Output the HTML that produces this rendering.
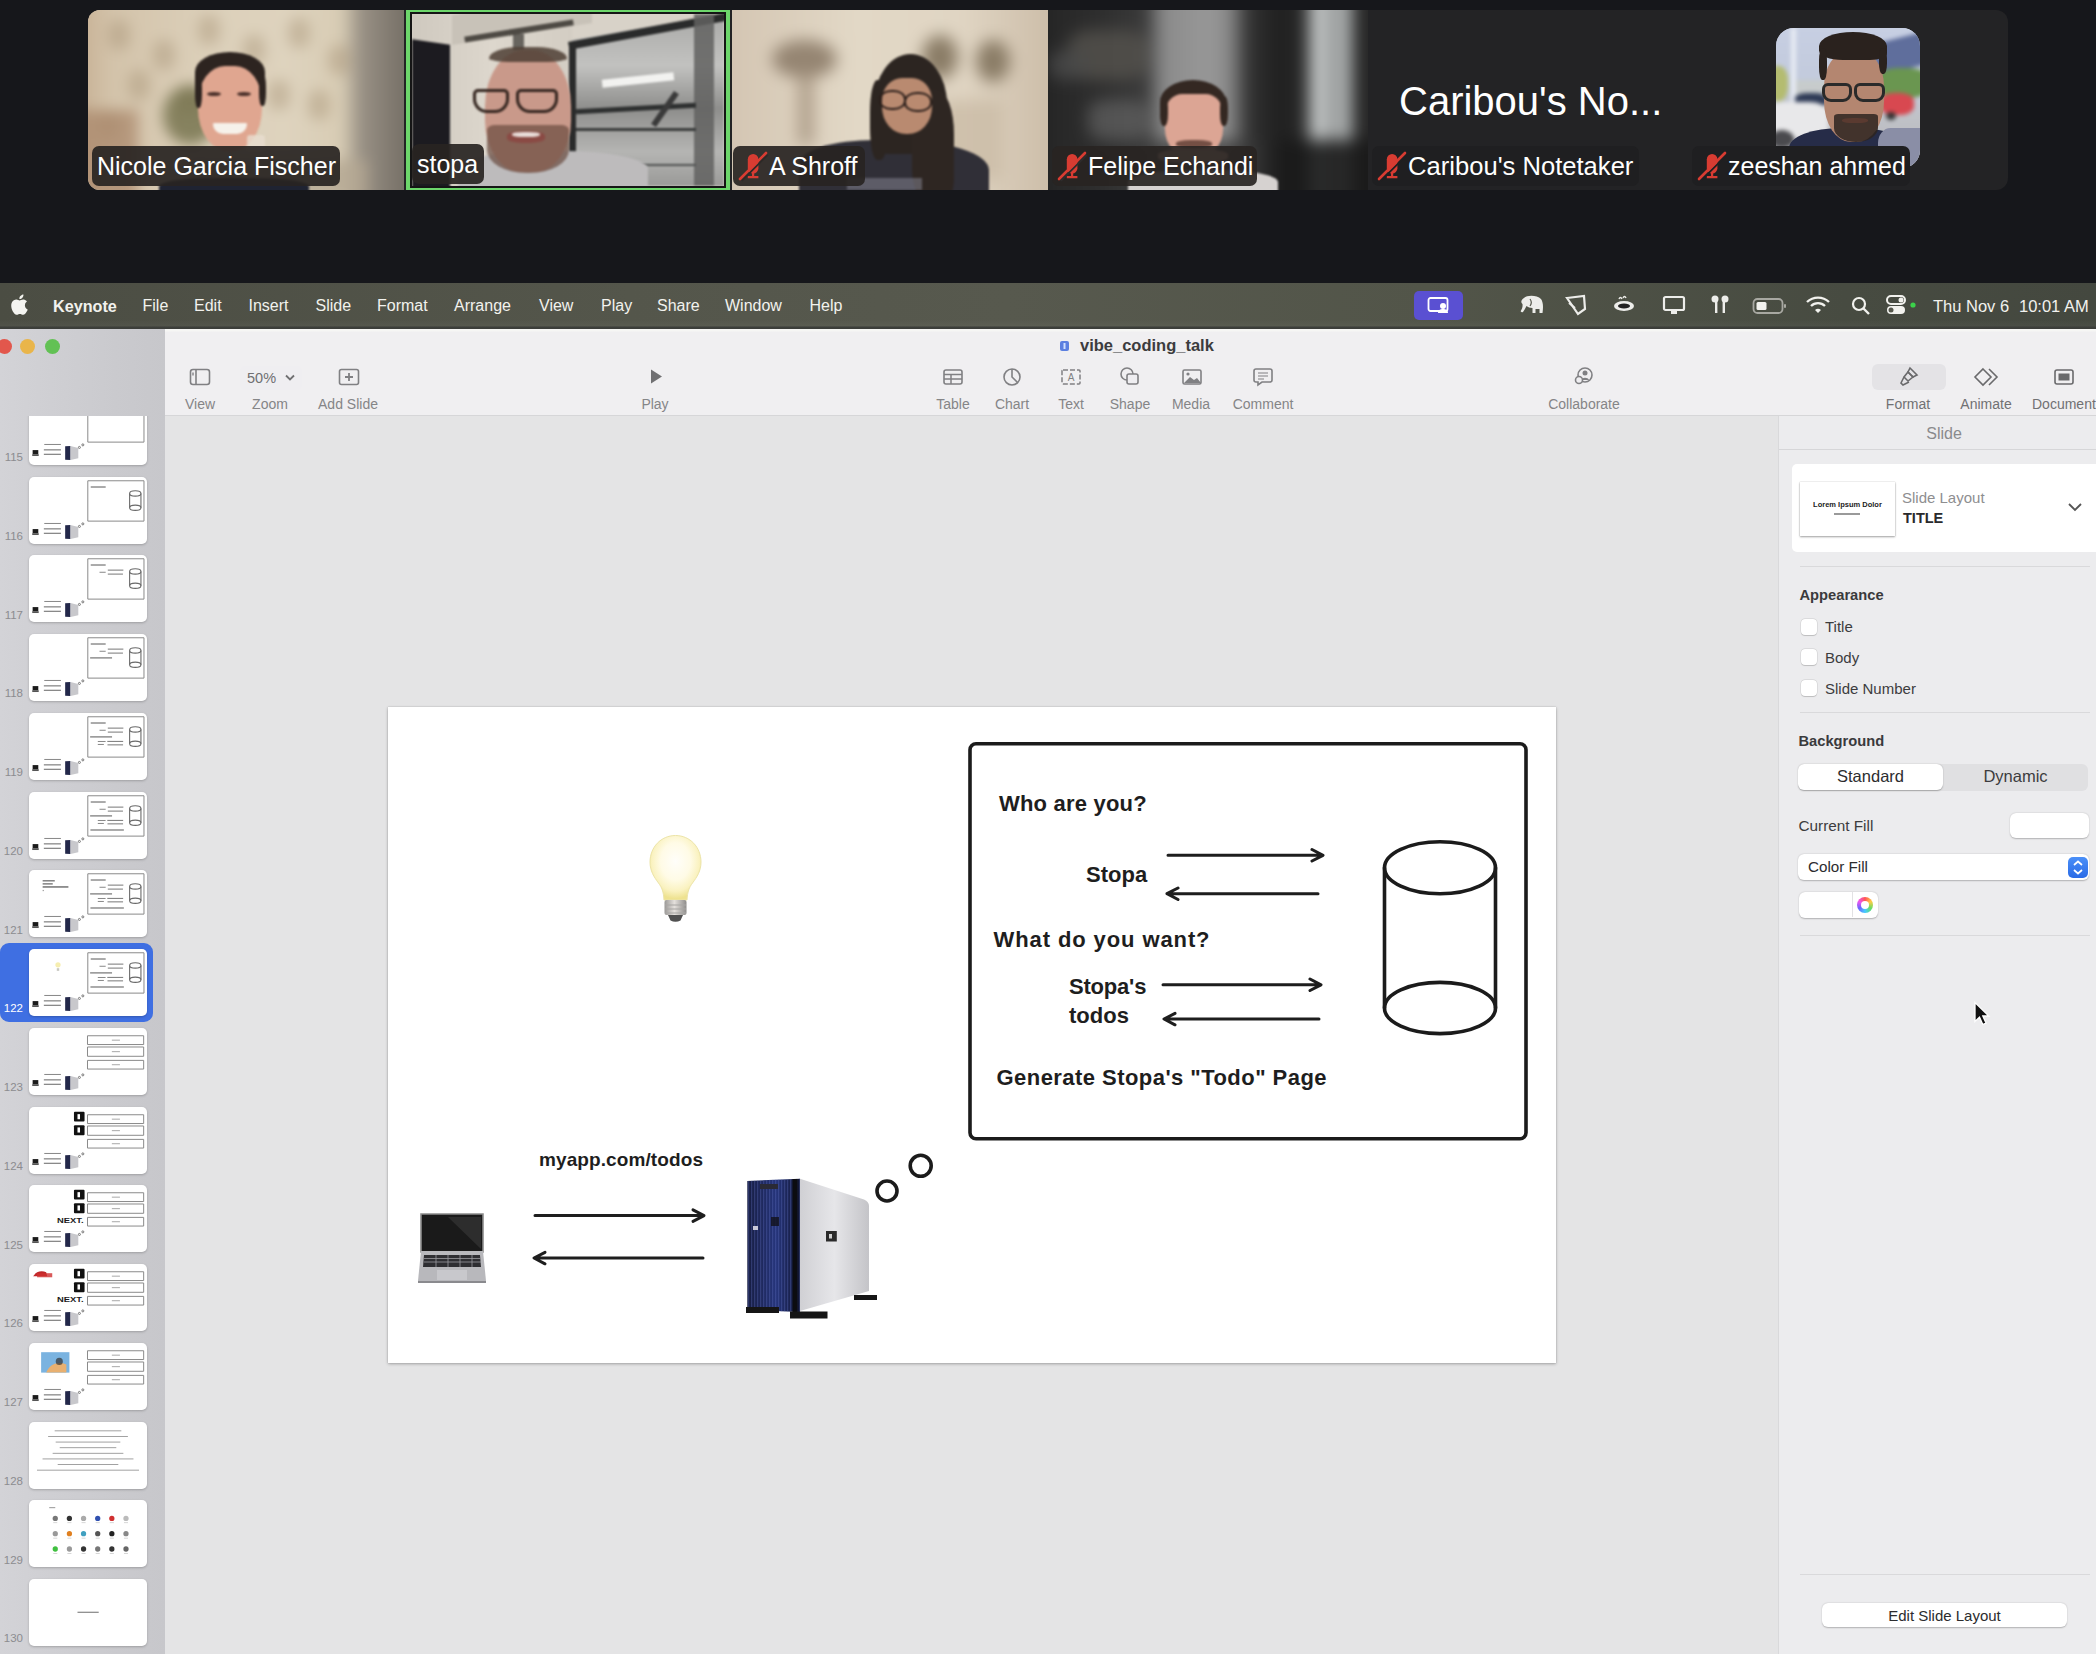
<!DOCTYPE html>
<html><head><meta charset="utf-8">
<style>
*{box-sizing:border-box;margin:0;padding:0}
html,body{width:2096px;height:1654px;overflow:hidden;background:#16171b;font-family:"Liberation Sans",sans-serif}
.a{position:absolute}
.lbl{position:absolute;top:146px;height:40px;border-radius:7px;background:rgba(40,36,34,.92);color:#fff;font-size:25px;line-height:40px;padding-left:5px;white-space:nowrap}
.mic{display:inline-block;vertical-align:top}
.menu{position:absolute;top:283px;left:0;width:2096px;height:46px;background:linear-gradient(180deg,rgba(255,255,255,0) 0%,rgba(255,255,255,0) 80%,rgba(255,255,255,.03) 93%,#3c3e3a 96%,#3c3e3a 100%),linear-gradient(90deg,#4b4d43 0%,#54564b 30%,#57594e 48%,#525549 68%,#474b41 88%,#44483f 100%)}
.mi{position:absolute;top:14.5px;line-height:1;font-size:16px;color:#f2f2ee;white-space:nowrap}
.tb{position:absolute;font-size:14px;color:#858587;white-space:nowrap;text-align:center}
.ic{position:absolute}
.ins{line-height:1;white-space:nowrap}
.cb{left:1801px;width:15.5px;height:15.5px;border-radius:4px;background:#fff;box-shadow:0 0 0 .5px rgba(0,0,0,.12),0 .5px 1px rgba(0,0,0,.15)}
.hand{font-size:22px;font-weight:700;line-height:1;color:#1e1e1e;white-space:nowrap}
</style></head><body>

<!-- ZOOM STRIP -->
<div class="a" id="strip" style="left:88px;top:10px;width:1920px;height:180px;border-radius:12px;overflow:hidden;background:#232325">
<div class="a" style="left:0;top:0;width:316px;height:180px;overflow:hidden;background:#d8ccb6">
<div class="a" style="left:-20px;top:-20px;width:356px;height:220px;filter:blur(7px)">
<div class="a" style="left:0px;top:0px;width:356px;height:220px;background:linear-gradient(90deg,#c2a98c 0%,#d3c3aa 12%,#dcd0ba 40%,#ded3be 62%,#d8ccb4 77%,#9a9286 82%,#837c72 90%,#6a645c 100%);"></div>
<div class="a" style="left:40px;top:30px;width:22px;height:30px;background:#a99478;border-radius:40%;opacity:.45"></div>
<div class="a" style="left:85px;top:50px;width:22px;height:30px;background:#a99478;border-radius:40%;opacity:.45"></div>
<div class="a" style="left:130px;top:25px;width:22px;height:30px;background:#a99478;border-radius:40%;opacity:.45"></div>
<div class="a" style="left:175px;top:45px;width:22px;height:30px;background:#a99478;border-radius:40%;opacity:.45"></div>
<div class="a" style="left:220px;top:28px;width:22px;height:30px;background:#a99478;border-radius:40%;opacity:.45"></div>
<div class="a" style="left:260px;top:55px;width:22px;height:30px;background:#a99478;border-radius:40%;opacity:.45"></div>
<div class="a" style="left:60px;top:80px;width:22px;height:30px;background:#a99478;border-radius:40%;opacity:.45"></div>
<div class="a" style="left:110px;top:95px;width:22px;height:30px;background:#a99478;border-radius:40%;opacity:.45"></div>
<div class="a" style="left:200px;top:90px;width:22px;height:30px;background:#a99478;border-radius:40%;opacity:.45"></div>
<div class="a" style="left:240px;top:100px;width:22px;height:30px;background:#a99478;border-radius:40%;opacity:.45"></div>
<div class="a" style="left:30px;top:120px;width:22px;height:30px;background:#a99478;border-radius:40%;opacity:.45"></div>
<div class="a" style="left:95px;top:95px;width:55px;height:60px;background:#6a6842;border-radius:50%;opacity:.75"></div>
<div class="a" style="left:0px;top:120px;width:70px;height:100px;background:#a88468;opacity:.7"></div>
<div class="a" style="left:120px;top:170px;width:180px;height:40px;background:#b4a892;opacity:.8"></div>
</div>
<div class="a" style="left:-9px;top:-8px;width:316px;height:188px;filter:blur(1px)">
<div class="a" style="left:80px;top:176px;width:150px;height:20px;background:#1f2332;border-radius:40% 40% 0 0"></div>
<div class="a" style="left:116px;top:50px;width:70px;height:40px;background:#2d2420;border-radius:50% 50% 20% 20%"></div>
<div class="a" style="left:119px;top:64px;width:64px;height:86px;background:#e0a690;border-radius:42% 42% 50% 50%"></div>
<div class="a" style="left:116px;top:72px;width:7px;height:34px;background:#2d2420;border-radius:40%"></div>
<div class="a" style="left:180px;top:72px;width:7px;height:32px;background:#2d2420;border-radius:40%"></div>
<div class="a" style="left:128px;top:90px;width:14px;height:4px;background:#4a302a;border-radius:50%"></div>
<div class="a" style="left:158px;top:90px;width:14px;height:4px;background:#4a302a;border-radius:50%"></div>
<div class="a" style="left:134px;top:121px;width:34px;height:11px;background:#f6f1ea;border-radius:2px 2px 17px 17px"></div>
<div class="a" style="left:168px;top:133px;width:18px;height:16px;background:#e8ddd0;border-radius:3px;opacity:.8"></div>
</div>
<div class="lbl" style="left:4px;top:136px;width:248px">Nicole Garcia Fischer</div>
</div>
<div class="a" style="left:318px;top:-2px;width:324px;height:184px;background:#6dd66b;padding:4px">
<div style="position:relative;width:316px;height:176px;background:#151515;padding:2px;overflow:hidden">
<div style="position:relative;width:312px;height:172px;overflow:hidden;background:#d8d2c8">
<div class="a" style="left:0;top:0;width:312px;height:172px;filter:blur(1.2px)">
<div class="a" style="left:0px;top:0px;width:160px;height:172px;background:linear-gradient(90deg,#cfc9bf,#ddd7cd 50%,#d3cdc3);"></div>
<div class="a" style="left:0px;top:28px;width:38px;height:160px;background:#1c1b20;transform:skewY(8deg)"></div>
<div class="a" style="left:40px;top:-10px;width:140px;height:30px;background:#c8c2b8;transform:skewY(-9deg)"></div>
<div class="a" style="left:52px;top:14px;width:110px;height:6px;background:#4e4a44;transform:rotate(-9deg)"></div>
<div class="a" style="left:101px;top:20px;width:11px;height:16px;background:#4a4742;opacity:.8"></div>
<div class="a" style="left:160px;top:0px;width:152px;height:172px;background:linear-gradient(180deg,#a9a9a7 0%,#c2c2c0 30%,#8e8e8c 55%,#b5b5b3 80%,#9a9a98 100%);clip-path:polygon(0 26px,100% 0,100% 100%,0 100%)"></div>
<div class="a" style="left:156px;top:0px;width:160px;height:8px;background:#2a2b2b;transform:rotate(-10.5deg);transform-origin:0 0;top:28px"></div>
<div class="a" style="left:157px;top:28px;width:7px;height:130px;background:#2a2b2b;"></div>
<div class="a" style="left:282px;top:0px;width:20px;height:172px;background:#626260;opacity:.85"></div>
<div class="a" style="left:190px;top:62px;width:72px;height:8px;background:#f2f2f0;transform:rotate(-6deg)"></div>
<div class="a" style="left:164px;top:92px;width:120px;height:5px;background:#2e3030;transform:rotate(-3deg)"></div>
<div class="a" style="left:164px;top:114px;width:120px;height:3px;background:#3a3c3c;"></div>
<div class="a" style="left:164px;top:150px;width:120px;height:2px;background:#505252;"></div>
<div class="a" style="left:250px;top:75px;width:6px;height:40px;background:#3a3a3a;transform:rotate(35deg)"></div>
</div>
<div class="a" style="left:-9px;top:-11px;width:321px;height:183px;filter:blur(.8px)">
<div class="a" style="left:55px;top:148px;width:190px;height:40px;background:#bdbbbc;border-radius:45% 45% 0 0"></div>
<div class="a" style="left:82px;top:47px;width:86px;height:122px;background:#c9998a;border-radius:46% 46% 42% 42%"></div>
<div class="a" style="left:86px;top:44px;width:78px;height:15px;background:#4e3e34;border-radius:50% 50% 40% 40% / 100% 100% 30% 30%;opacity:.85"></div>
<div class="a" style="left:84px;top:122px;width:82px;height:48px;background:#6a4a3e;border-radius:10% 10% 48% 48%;opacity:.7"></div>
<div class="a" style="left:104px;top:128px;width:38px;height:12px;background:#8a4a44;border-radius:40%"></div>
<div class="a" style="left:109px;top:129px;width:28px;height:5px;background:#e8dcd8;border-radius:40%"></div>
<div class="a" style="left:70px;top:86px;width:36px;height:24px;background:transparent;border:3px solid #352620;border-radius:5px 5px 14px 14px"></div>
<div class="a" style="left:113px;top:86px;width:42px;height:24px;background:transparent;border:3px solid #352620;border-radius:5px 5px 14px 14px"></div>
</div>
<div class="lbl" style="left:0;top:130px;width:72px">stopa</div>
</div></div></div>
<div class="a" style="left:644px;top:0;width:316px;height:180px;overflow:hidden;background:#ddd2c0">
<div class="a" style="left:-20px;top:-20px;width:356px;height:220px;filter:blur(8px)">
<div class="a" style="left:0px;top:0px;width:356px;height:220px;background:linear-gradient(90deg,#d2c3b0,#e2d8c6 40%,#e0d5c3 70%,#c9b9a4);"></div>
<div class="a" style="left:60px;top:50px;width:65px;height:38px;background:#958572;border-radius:50%"></div>
<div class="a" style="left:86px;top:85px;width:16px;height:70px;background:#b0a08c;"></div>
<div class="a" style="left:210px;top:45px;width:36px;height:44px;background:#8a7c66;border-radius:50%"></div>
<div class="a" style="left:264px;top:50px;width:34px;height:42px;background:#8a7c66;border-radius:50%"></div>
<div class="a" style="left:230px;top:110px;width:60px;height:80px;background:#cbbba6;opacity:.8"></div>
</div>
<div class="a" style="left:0;top:0;width:316px;height:180px;filter:blur(1px)">
<div class="a" style="left:67px;top:130px;width:190px;height:60px;background:#302f37;border-radius:40% 50% 0 0"></div>
<div class="a" style="left:142px;top:44px;width:73px;height:100px;background:#2c2521;border-radius:50% 50% 30% 20%"></div>
<div class="a" style="left:180px;top:80px;width:42px;height:110px;background:#2e2622;border-radius:20% 40% 20% 30%"></div>
<div class="a" style="left:138px;top:70px;width:18px;height:80px;background:#2c2521;border-radius:40%"></div>
<div class="a" style="left:150px;top:68px;width:50px;height:56px;background:#b98a70;border-radius:40% 40% 48% 48%"></div>
<div class="a" style="left:147px;top:80px;width:27px;height:20px;background:transparent;border:2.5px solid #2a1e1a;border-radius:45%"></div>
<div class="a" style="left:172px;top:82px;width:28px;height:20px;background:transparent;border:2.5px solid #2a1e1a;border-radius:45%"></div>
<div class="a" style="left:115px;top:168px;width:75px;height:12px;background:#8a8a98;opacity:.5"></div>
</div>
<div class="lbl" style="left:1px;top:136px;width:132px;padding-left:36px"><svg style="position:absolute;left:0;top:0" width="40" height="40" viewBox="0 0 40 40"><rect x="14.8" y="8" width="10.6" height="19.5" rx="5.3" fill="#d83c32"/><path d="M20.1 27v3M14.8 31.2h10.6" stroke="#d83c32" stroke-width="2.2" fill="none"/><path d="M8.8 34.8L34.8 8.8" stroke="#2e2a28" stroke-width="1.8"/><path d="M7 33L33 7" stroke="#d83c32" stroke-width="2.6" stroke-linecap="round"/></svg>A Shroff</div>
</div>
<div class="a" style="left:960px;top:0;width:320px;height:180px;overflow:hidden;background:#2a2a2a">
<div class="a" style="left:-20px;top:-20px;width:360px;height:220px;filter:blur(8px)">
<div class="a" style="left:0px;top:0px;width:360px;height:220px;background:linear-gradient(90deg,#141414 0%,#262626 5%,#2e2e2e 20%,#3a3a3a 33%,#8a8a8a 37%,#989898 50%,#8a8a8a 56%,#333 61%,#1f1f1f 70%,#2a2a2a 77%,#b8bcbc 79%,#d0d4d4 83%,#555 84.5%,#c0c4c4 86%,#a8acac 89%,#2a2a2a 91%,#222 100%);"></div>
<div class="a" style="left:40px;top:40px;width:80px;height:50px;background:#55524e;border-radius:30%;opacity:.8"></div>
<div class="a" style="left:60px;top:110px;width:60px;height:40px;background:#6a6a6a;border-radius:30%;opacity:.6"></div>
<div class="a" style="left:120px;top:150px;width:110px;height:70px;background:#3a3a3a;opacity:.8"></div>
<div class="a" style="left:250px;top:150px;width:110px;height:70px;background:#1a1a1a;opacity:.9"></div>
<div class="a" style="left:20px;top:60px;width:40px;height:30px;background:#4a4a4a;border-radius:40%;opacity:.8"></div>
</div>
<div class="a" style="left:0;top:0;width:320px;height:180px;filter:blur(.9px)">
<div class="a" style="left:80px;top:160px;width:150px;height:30px;background:#d6d2d0;border-radius:40% 40% 0 0"></div>
<div class="a" style="left:112px;top:70px;width:66px;height:44px;background:#342822;border-radius:50% 50% 20% 20%"></div>
<div class="a" style="left:117px;top:84px;width:58px;height:64px;background:#dca594;border-radius:30% 30% 45% 45%"></div>
<div class="a" style="left:112px;top:86px;width:8px;height:30px;background:#342822;border-radius:40%"></div>
<div class="a" style="left:172px;top:86px;width:8px;height:30px;background:#342822;border-radius:40%"></div>
<div class="a" style="left:128px;top:130px;width:36px;height:8px;background:#5a3a30;border-radius:40%;opacity:.8"></div>
<div class="a" style="left:110px;top:139px;width:70px;height:14px;background:#e6b8a8;border-radius:40%"></div>
</div>
<div class="lbl" style="left:4px;top:136px;width:205px;padding-left:36px"><svg style="position:absolute;left:0;top:0" width="40" height="40" viewBox="0 0 40 40"><rect x="14.8" y="8" width="10.6" height="19.5" rx="5.3" fill="#d83c32"/><path d="M20.1 27v3M14.8 31.2h10.6" stroke="#d83c32" stroke-width="2.2" fill="none"/><path d="M8.8 34.8L34.8 8.8" stroke="#2e2c2c" stroke-width="1.8"/><path d="M7 33L33 7" stroke="#d83c32" stroke-width="2.6" stroke-linecap="round"/></svg>Felipe Echandi</div>
</div>
<div class="a" style="left:1311px;top:71px;color:#fff;font-size:40px;white-space:nowrap;line-height:1">Caribou's No...</div>
<div class="lbl" style="left:1284px;top:136px;width:267px;padding-left:36px;background:#1f1f21;font-size:25.6px"><svg style="position:absolute;left:0;top:0" width="40" height="40" viewBox="0 0 40 40"><rect x="14.8" y="8" width="10.6" height="19.5" rx="5.3" fill="#d83c32"/><path d="M20.1 27v3M14.8 31.2h10.6" stroke="#d83c32" stroke-width="2.2" fill="none"/><path d="M8.8 34.8L34.8 8.8" stroke="#1f1f21" stroke-width="1.8"/><path d="M7 33L33 7" stroke="#d83c32" stroke-width="2.6" stroke-linecap="round"/></svg>Caribou's Notetaker</div>
<div class="a" style="left:1688px;top:18px;width:144px;height:140px;border-radius:18px;overflow:hidden;background:#c5cde0">
<div class="a" style="left:-10px;top:-10px;width:164px;height:164px;filter:blur(2px)">
<div class="a" style="left:0px;top:0px;width:164px;height:164px;background:linear-gradient(180deg,#c8d0e4 0%,#c2cadc 40%,#c0c2c8 60%,#b4b4b6 100%);"></div>
<div class="a" style="left:25px;top:10px;width:5px;height:75px;background:#e8ecf4;"></div>
<div class="a" style="left:109px;top:19px;width:55px;height:33px;background:#5f6e9c;transform:skewY(-14deg)"></div>
<div class="a" style="left:110px;top:50px;width:54px;height:30px;background:#6a9650;border-radius:40%"></div>
<div class="a" style="left:0px;top:48px;width:22px;height:35px;background:#b4bc70;border-radius:40%"></div>
<div class="a" style="left:30px;top:62px;width:40px;height:20px;background:#c8ccc8;opacity:.8"></div>
<div class="a" style="left:29px;top:75px;width:32px;height:12px;background:#2e3a56;border-radius:40% 40% 10% 10%"></div>
<div class="a" style="left:0px;top:84px;width:62px;height:36px;background:#e8e8ea;border-radius:30%"></div>
<div class="a" style="left:4px;top:112px;width:24px;height:18px;background:#4a4a4e;border-radius:50%"></div>
<div class="a" style="left:114px;top:75px;width:34px;height:22px;background:#d84850;border-radius:40%"></div>
<div class="a" style="left:120px;top:94px;width:10px;height:8px;background:#333;border-radius:50%"></div>
</div>
<div class="a" style="left:0;top:0;width:144px;height:140px;filter:blur(.7px)">
<div class="a" style="left:13px;top:100px;width:130px;height:50px;background:#262c48;border-radius:40% 50% 0 0"></div>
<div class="a" style="left:102px;top:100px;width:42px;height:50px;background:#8a8ea6;border-radius:30% 0 0 0"></div>
<div class="a" style="left:48px;top:24px;width:60px;height:90px;background:#b48670;border-radius:38% 38% 45% 45%"></div>
<div class="a" style="left:43px;top:4px;width:68px;height:28px;background:#2a221e;border-radius:50% 50% 25% 35%"></div>
<div class="a" style="left:43px;top:20px;width:8px;height:32px;background:#2a221e;border-radius:40%"></div>
<div class="a" style="left:103px;top:20px;width:8px;height:26px;background:#2a221e;border-radius:40%"></div>
<div class="a" style="left:58px;top:86px;width:44px;height:28px;background:#2e2420;border-radius:10% 10% 50% 50%;opacity:.85"></div>
<div class="a" style="left:66px;top:90px;width:26px;height:5px;background:#5a3a30;border-radius:40%"></div>
<div class="a" style="left:46px;top:55px;width:30px;height:19px;background:transparent;border:3px solid #2a2a2a;border-radius:6px 6px 9px 9px"></div>
<div class="a" style="left:78px;top:55px;width:31px;height:19px;background:transparent;border:3px solid #2a2a2a;border-radius:6px 6px 9px 9px"></div>
</div></div>
<div class="lbl" style="left:1604px;top:136px;width:218px;padding-left:36px;background:#1f1f21"><svg style="position:absolute;left:0;top:0" width="40" height="40" viewBox="0 0 40 40"><rect x="14.8" y="8" width="10.6" height="19.5" rx="5.3" fill="#d83c32"/><path d="M20.1 27v3M14.8 31.2h10.6" stroke="#d83c32" stroke-width="2.2" fill="none"/><path d="M8.8 34.8L34.8 8.8" stroke="#1f1f21" stroke-width="1.8"/><path d="M7 33L33 7" stroke="#d83c32" stroke-width="2.6" stroke-linecap="round"/></svg>zeeshan ahmed</div>
</div>

<!-- MENU BAR -->
<div class="menu" id="menubar">
 <svg class="a" style="left:10px;top:11px" width="18" height="21" viewBox="0 0 18 21"><path fill="#f4f4f0" d="M14.9 11.2c0-2.5 2-3.6 2.1-3.7-1.2-1.7-3-1.9-3.6-2-1.5-.2-3 .9-3.8.9-.8 0-2-.9-3.3-.8C4.6 5.6 3 6.6 2.1 8.1.3 11.2 1.6 15.8 3.4 18.3c.9 1.2 1.9 2.6 3.2 2.5 1.3 0 1.8-.8 3.3-.8s2 .8 3.3.8c1.4 0 2.2-1.2 3.1-2.5 1-1.4 1.4-2.8 1.4-2.9 0 0-2.8-1.1-2.8-4.2zM12.4 3.7c.7-.9 1.2-2 1-3.2-1 0-2.2.7-3 1.5-.6.7-1.2 1.9-1 3.1 1.1.1 2.3-.6 3-1.4z"/></svg>
 <div class="mi" style="left:53px;font-weight:700;font-size:16.2px">Keynote</div>
 <div class="mi" style="left:142.5px">File</div>
 <div class="mi" style="left:194px">Edit</div>
 <div class="mi" style="left:248.5px">Insert</div>
 <div class="mi" style="left:315.5px">Slide</div>
 <div class="mi" style="left:377px">Format</div>
 <div class="mi" style="left:454px">Arrange</div>
 <div class="mi" style="left:539px">View</div>
 <div class="mi" style="left:601px">Play</div>
 <div class="mi" style="left:657px">Share</div>
 <div class="mi" style="left:725px">Window</div>
 <div class="mi" style="left:809.5px">Help</div>
 <!-- right -->
 <div class="a" style="left:1414px;top:8px;width:49px;height:29px;border-radius:5px;background:#5a50d2"></div>
 <svg class="a" style="left:1427px;top:13px" width="24" height="20" viewBox="0 0 24 20"><rect x="1.5" y="2" width="19" height="13" rx="2" fill="none" stroke="#fff" stroke-width="1.8"/><circle cx="16" cy="10" r="3" fill="#fff"/><path d="M11 17c0-3 2.2-4 5-4s5 1 5 4z" fill="#fff"/></svg>
 <svg class="a" style="left:1517px;top:10px" width="28" height="24" viewBox="0 0 28 24"><path fill="#ededea" d="M7 5C10 2 20 2 24 6c2 3 2.5 7 1.5 14h-3v-4h-4v4h-3v-5c-2.5 0-4.5-.8-6-2-1 2-2 4-3.5 6-1.5.5-3 0-2-1.5 1.2-1.8 1.8-4 1.5-6.5C3.2 9 4.5 6.5 7 5z"/><path d="M13 6c1.5 2 1.5 5 0 7" stroke="#55574c" stroke-width="1.2" fill="none"/></svg>
 <svg class="a" style="left:1564px;top:11px" width="24" height="22" viewBox="0 0 24 22"><path fill="none" stroke="#ededea" stroke-width="2.2" d="M3 4l17-2 1 13-7 5z"/><path fill="none" stroke="#ededea" stroke-width="2" d="M5 9l6 5"/></svg>
 <svg class="a" style="left:1611px;top:10px" width="26" height="24" viewBox="0 0 26 24"><ellipse cx="13" cy="13" rx="10" ry="5" fill="#ededea"/><ellipse cx="13" cy="13" rx="6" ry="2.5" fill="#222"/><path d="M8 6c1-2 2-2 3 0M12 5c1-2 2-2 3 0" stroke="#ededea" fill="none" stroke-width="1.5"/></svg>
 <svg class="a" style="left:1662px;top:12px" width="24" height="21" viewBox="0 0 24 21"><rect x="2" y="2" width="20" height="13" rx="1.5" fill="none" stroke="#ededea" stroke-width="2.2"/><rect x="9" y="16" width="6" height="3" fill="#ededea"/></svg>
 <svg class="a" style="left:1707px;top:10px" width="26" height="24" viewBox="0 0 26 24"><circle cx="8" cy="6" r="3.5" fill="#ededea"/><rect x="8" y="5" width="2.4" height="15" fill="#ededea"/><circle cx="18" cy="6" r="3.5" fill="#ededea"/><rect x="15.6" y="5" width="2.4" height="15" fill="#ededea"/></svg>
 <svg class="a" style="left:1752px;top:14px" width="36" height="18" viewBox="0 0 36 18"><rect x="1.5" y="2" width="29" height="14" rx="4" fill="none" stroke="#a8a8a2" stroke-width="1.8"/><rect x="4.5" y="5" width="10" height="8" rx="1.5" fill="#f2f2ee"/><rect x="32" y="7" width="2" height="4" rx="1" fill="#a8a8a2"/></svg>
 <svg class="a" style="left:1805px;top:12px" width="26" height="20" viewBox="0 0 26 20"><path d="M2 7a16 16 0 0 1 22 0" stroke="#f2f2ee" stroke-width="2.4" fill="none"/><path d="M6 11a10 10 0 0 1 14 0" stroke="#f2f2ee" stroke-width="2.4" fill="none"/><path d="M10 15a4.5 4.5 0 0 1 6 0l-3 3z" fill="#f2f2ee"/></svg>
 <svg class="a" style="left:1851px;top:13px" width="20" height="20" viewBox="0 0 20 20"><circle cx="8" cy="8" r="6" stroke="#f2f2ee" stroke-width="2.2" fill="none"/><path d="M12.5 12.5l5.5 5.5" stroke="#f2f2ee" stroke-width="2.4"/></svg>
 <svg class="a" style="left:1885px;top:11px" width="34" height="22" viewBox="0 0 34 22"><rect x="2" y="2" width="18" height="8" rx="4" fill="none" stroke="#f2f2ee" stroke-width="2"/><circle cx="16" cy="6" r="2.5" fill="#f2f2ee"/><rect x="2" y="12" width="18" height="8" rx="4" fill="#f2f2ee"/><circle cx="6" cy="16" r="2.5" fill="#55574c"/><circle cx="28" cy="11" r="2.6" fill="#3bd14a"/></svg>
 <div class="mi" style="left:1933px;font-size:16.5px">Thu Nov 6</div>
 <div class="mi" style="left:2019px;font-size:16.5px">10:01 AM</div>
</div>

<!-- KEYNOTE WINDOW -->
<div class="a" id="sidebar" style="left:0;top:329px;width:165px;height:1325px;background:linear-gradient(90deg,#d3d3d7,#cacace 70%,#c7c7cb)"></div>
<div class="a" id="sidebarthumbs" style="left:0;top:416px;width:165px;height:1238px;overflow:hidden">
<div class="a" style="left:29px;top:-18.25px;width:118px;height:67px;border-radius:5px;background:#fff;overflow:hidden;box-shadow:0 1px 2.5px rgba(0,0,0,.22)"><svg width="118" height="67" viewBox="0 0 1168 656" preserveAspectRatio="none" style="position:absolute;left:0;top:0"><rect x="36" y="510" width="56" height="40" fill="#1b1b1b"/><rect x="32" y="550" width="64" height="18" fill="#555"/><rect x="151" y="450" width="165" height="10" fill="#8a8a8a"/><path d="M147 508H316M147 551H316" stroke="#666" stroke-width="1" vector-effect="non-scaling-stroke" fill="none"/><path d="M358 472L411 470V606L358 604z" fill="#23284a"/><path d="M411 470L488 490V590L411 606z" fill="#c8c8cc"/><circle cx="499" cy="484" r="10" stroke="#777" stroke-width="1" vector-effect="non-scaling-stroke" fill="none"/><circle cx="533" cy="459" r="10" stroke="#777" stroke-width="1" vector-effect="non-scaling-stroke" fill="none"/><rect x="582" y="37" width="556" height="395" stroke="#8a8a8a" stroke-width="1" vector-effect="non-scaling-stroke" fill="none"/></svg></div>
<div class="a" style="left:0;top:36.05px;width:23px;text-align:right;font-size:11.5px;line-height:1;color:#8c8c90">115</div>
<div class="a" style="left:29px;top:60.50px;width:118px;height:67px;border-radius:5px;background:#fff;overflow:hidden;box-shadow:0 1px 2.5px rgba(0,0,0,.22)"><svg width="118" height="67" viewBox="0 0 1168 656" preserveAspectRatio="none" style="position:absolute;left:0;top:0"><rect x="36" y="510" width="56" height="40" fill="#1b1b1b"/><rect x="32" y="550" width="64" height="18" fill="#555"/><rect x="151" y="450" width="165" height="10" fill="#8a8a8a"/><path d="M147 508H316M147 551H316" stroke="#666" stroke-width="1" vector-effect="non-scaling-stroke" fill="none"/><path d="M358 472L411 470V606L358 604z" fill="#23284a"/><path d="M411 470L488 490V590L411 606z" fill="#c8c8cc"/><circle cx="499" cy="484" r="10" stroke="#777" stroke-width="1" vector-effect="non-scaling-stroke" fill="none"/><circle cx="533" cy="459" r="10" stroke="#777" stroke-width="1" vector-effect="non-scaling-stroke" fill="none"/><rect x="582" y="37" width="556" height="395" stroke="#8a8a8a" stroke-width="1" vector-effect="non-scaling-stroke" fill="none"/><rect x="611" y="92" width="148" height="12" fill="#777"/><g stroke="#6a6a6a" stroke-width="1.1" fill="none"><ellipse cx="1052" cy="161" rx="56" ry="26" vector-effect="non-scaling-stroke"/><ellipse cx="1052" cy="301" rx="56" ry="26" vector-effect="non-scaling-stroke"/><path d="M996 161V301M1108 161V301" vector-effect="non-scaling-stroke"/></g></svg></div>
<div class="a" style="left:0;top:114.80px;width:23px;text-align:right;font-size:11.5px;line-height:1;color:#8c8c90">116</div>
<div class="a" style="left:29px;top:139.25px;width:118px;height:67px;border-radius:5px;background:#fff;overflow:hidden;box-shadow:0 1px 2.5px rgba(0,0,0,.22)"><svg width="118" height="67" viewBox="0 0 1168 656" preserveAspectRatio="none" style="position:absolute;left:0;top:0"><rect x="36" y="510" width="56" height="40" fill="#1b1b1b"/><rect x="32" y="550" width="64" height="18" fill="#555"/><rect x="151" y="450" width="165" height="10" fill="#8a8a8a"/><path d="M147 508H316M147 551H316" stroke="#666" stroke-width="1" vector-effect="non-scaling-stroke" fill="none"/><path d="M358 472L411 470V606L358 604z" fill="#23284a"/><path d="M411 470L488 490V590L411 606z" fill="#c8c8cc"/><circle cx="499" cy="484" r="10" stroke="#777" stroke-width="1" vector-effect="non-scaling-stroke" fill="none"/><circle cx="533" cy="459" r="10" stroke="#777" stroke-width="1" vector-effect="non-scaling-stroke" fill="none"/><rect x="582" y="37" width="556" height="395" stroke="#8a8a8a" stroke-width="1" vector-effect="non-scaling-stroke" fill="none"/><rect x="611" y="92" width="148" height="12" fill="#777"/><g stroke="#6a6a6a" stroke-width="1.1" fill="none"><ellipse cx="1052" cy="161" rx="56" ry="26" vector-effect="non-scaling-stroke"/><ellipse cx="1052" cy="301" rx="56" ry="26" vector-effect="non-scaling-stroke"/><path d="M996 161V301M1108 161V301" vector-effect="non-scaling-stroke"/></g><rect x="698" y="164" width="61" height="10" fill="#8a8a8a"/><path d="M780 148H934M780 187H930" stroke="#777" stroke-width="1" vector-effect="non-scaling-stroke" fill="none"/></svg></div>
<div class="a" style="left:0;top:193.55px;width:23px;text-align:right;font-size:11.5px;line-height:1;color:#8c8c90">117</div>
<div class="a" style="left:29px;top:218.00px;width:118px;height:67px;border-radius:5px;background:#fff;overflow:hidden;box-shadow:0 1px 2.5px rgba(0,0,0,.22)"><svg width="118" height="67" viewBox="0 0 1168 656" preserveAspectRatio="none" style="position:absolute;left:0;top:0"><rect x="36" y="510" width="56" height="40" fill="#1b1b1b"/><rect x="32" y="550" width="64" height="18" fill="#555"/><rect x="151" y="450" width="165" height="10" fill="#8a8a8a"/><path d="M147 508H316M147 551H316" stroke="#666" stroke-width="1" vector-effect="non-scaling-stroke" fill="none"/><path d="M358 472L411 470V606L358 604z" fill="#23284a"/><path d="M411 470L488 490V590L411 606z" fill="#c8c8cc"/><circle cx="499" cy="484" r="10" stroke="#777" stroke-width="1" vector-effect="non-scaling-stroke" fill="none"/><circle cx="533" cy="459" r="10" stroke="#777" stroke-width="1" vector-effect="non-scaling-stroke" fill="none"/><rect x="582" y="37" width="556" height="395" stroke="#8a8a8a" stroke-width="1" vector-effect="non-scaling-stroke" fill="none"/><rect x="611" y="92" width="148" height="12" fill="#777"/><g stroke="#6a6a6a" stroke-width="1.1" fill="none"><ellipse cx="1052" cy="161" rx="56" ry="26" vector-effect="non-scaling-stroke"/><ellipse cx="1052" cy="301" rx="56" ry="26" vector-effect="non-scaling-stroke"/><path d="M996 161V301M1108 161V301" vector-effect="non-scaling-stroke"/></g><rect x="698" y="164" width="61" height="10" fill="#8a8a8a"/><path d="M780 148H934M780 187H930" stroke="#777" stroke-width="1" vector-effect="non-scaling-stroke" fill="none"/><rect x="605" y="228" width="217" height="12" fill="#777"/></svg></div>
<div class="a" style="left:0;top:272.30px;width:23px;text-align:right;font-size:11.5px;line-height:1;color:#8c8c90">118</div>
<div class="a" style="left:29px;top:296.75px;width:118px;height:67px;border-radius:5px;background:#fff;overflow:hidden;box-shadow:0 1px 2.5px rgba(0,0,0,.22)"><svg width="118" height="67" viewBox="0 0 1168 656" preserveAspectRatio="none" style="position:absolute;left:0;top:0"><rect x="36" y="510" width="56" height="40" fill="#1b1b1b"/><rect x="32" y="550" width="64" height="18" fill="#555"/><rect x="151" y="450" width="165" height="10" fill="#8a8a8a"/><path d="M147 508H316M147 551H316" stroke="#666" stroke-width="1" vector-effect="non-scaling-stroke" fill="none"/><path d="M358 472L411 470V606L358 604z" fill="#23284a"/><path d="M411 470L488 490V590L411 606z" fill="#c8c8cc"/><circle cx="499" cy="484" r="10" stroke="#777" stroke-width="1" vector-effect="non-scaling-stroke" fill="none"/><circle cx="533" cy="459" r="10" stroke="#777" stroke-width="1" vector-effect="non-scaling-stroke" fill="none"/><rect x="582" y="37" width="556" height="395" stroke="#8a8a8a" stroke-width="1" vector-effect="non-scaling-stroke" fill="none"/><rect x="611" y="92" width="148" height="12" fill="#777"/><g stroke="#6a6a6a" stroke-width="1.1" fill="none"><ellipse cx="1052" cy="161" rx="56" ry="26" vector-effect="non-scaling-stroke"/><ellipse cx="1052" cy="301" rx="56" ry="26" vector-effect="non-scaling-stroke"/><path d="M996 161V301M1108 161V301" vector-effect="non-scaling-stroke"/></g><rect x="698" y="164" width="61" height="10" fill="#8a8a8a"/><path d="M780 148H934M780 187H930" stroke="#777" stroke-width="1" vector-effect="non-scaling-stroke" fill="none"/><rect x="605" y="228" width="217" height="12" fill="#777"/><rect x="681" y="274" width="77" height="10" fill="#8a8a8a"/><rect x="681" y="303" width="60" height="10" fill="#8a8a8a"/><path d="M775 278H932M777 312H931" stroke="#777" stroke-width="1" vector-effect="non-scaling-stroke" fill="none"/></svg></div>
<div class="a" style="left:0;top:351.05px;width:23px;text-align:right;font-size:11.5px;line-height:1;color:#8c8c90">119</div>
<div class="a" style="left:29px;top:375.50px;width:118px;height:67px;border-radius:5px;background:#fff;overflow:hidden;box-shadow:0 1px 2.5px rgba(0,0,0,.22)"><svg width="118" height="67" viewBox="0 0 1168 656" preserveAspectRatio="none" style="position:absolute;left:0;top:0"><rect x="36" y="510" width="56" height="40" fill="#1b1b1b"/><rect x="32" y="550" width="64" height="18" fill="#555"/><rect x="151" y="450" width="165" height="10" fill="#8a8a8a"/><path d="M147 508H316M147 551H316" stroke="#666" stroke-width="1" vector-effect="non-scaling-stroke" fill="none"/><path d="M358 472L411 470V606L358 604z" fill="#23284a"/><path d="M411 470L488 490V590L411 606z" fill="#c8c8cc"/><circle cx="499" cy="484" r="10" stroke="#777" stroke-width="1" vector-effect="non-scaling-stroke" fill="none"/><circle cx="533" cy="459" r="10" stroke="#777" stroke-width="1" vector-effect="non-scaling-stroke" fill="none"/><rect x="582" y="37" width="556" height="395" stroke="#8a8a8a" stroke-width="1" vector-effect="non-scaling-stroke" fill="none"/><rect x="611" y="92" width="148" height="12" fill="#777"/><g stroke="#6a6a6a" stroke-width="1.1" fill="none"><ellipse cx="1052" cy="161" rx="56" ry="26" vector-effect="non-scaling-stroke"/><ellipse cx="1052" cy="301" rx="56" ry="26" vector-effect="non-scaling-stroke"/><path d="M996 161V301M1108 161V301" vector-effect="non-scaling-stroke"/></g><rect x="698" y="164" width="61" height="10" fill="#8a8a8a"/><path d="M780 148H934M780 187H930" stroke="#777" stroke-width="1" vector-effect="non-scaling-stroke" fill="none"/><rect x="605" y="228" width="217" height="12" fill="#777"/><rect x="681" y="274" width="77" height="10" fill="#8a8a8a"/><rect x="681" y="303" width="60" height="10" fill="#8a8a8a"/><path d="M775 278H932M777 312H931" stroke="#777" stroke-width="1" vector-effect="non-scaling-stroke" fill="none"/><rect x="608" y="366" width="331" height="12" fill="#777"/></svg></div>
<div class="a" style="left:0;top:429.80px;width:23px;text-align:right;font-size:11.5px;line-height:1;color:#8c8c90">120</div>
<div class="a" style="left:29px;top:454.25px;width:118px;height:67px;border-radius:5px;background:#fff;overflow:hidden;box-shadow:0 1px 2.5px rgba(0,0,0,.22)"><svg width="118" height="67" viewBox="0 0 1168 656" preserveAspectRatio="none" style="position:absolute;left:0;top:0"><rect x="36" y="510" width="56" height="40" fill="#1b1b1b"/><rect x="32" y="550" width="64" height="18" fill="#555"/><rect x="151" y="450" width="165" height="10" fill="#8a8a8a"/><path d="M147 508H316M147 551H316" stroke="#666" stroke-width="1" vector-effect="non-scaling-stroke" fill="none"/><path d="M358 472L411 470V606L358 604z" fill="#23284a"/><path d="M411 470L488 490V590L411 606z" fill="#c8c8cc"/><circle cx="499" cy="484" r="10" stroke="#777" stroke-width="1" vector-effect="non-scaling-stroke" fill="none"/><circle cx="533" cy="459" r="10" stroke="#777" stroke-width="1" vector-effect="non-scaling-stroke" fill="none"/><rect x="582" y="37" width="556" height="395" stroke="#8a8a8a" stroke-width="1" vector-effect="non-scaling-stroke" fill="none"/><rect x="611" y="92" width="148" height="12" fill="#777"/><g stroke="#6a6a6a" stroke-width="1.1" fill="none"><ellipse cx="1052" cy="161" rx="56" ry="26" vector-effect="non-scaling-stroke"/><ellipse cx="1052" cy="301" rx="56" ry="26" vector-effect="non-scaling-stroke"/><path d="M996 161V301M1108 161V301" vector-effect="non-scaling-stroke"/></g><rect x="698" y="164" width="61" height="10" fill="#8a8a8a"/><path d="M780 148H934M780 187H930" stroke="#777" stroke-width="1" vector-effect="non-scaling-stroke" fill="none"/><rect x="605" y="228" width="217" height="12" fill="#777"/><rect x="681" y="274" width="77" height="10" fill="#8a8a8a"/><rect x="681" y="303" width="60" height="10" fill="#8a8a8a"/><path d="M775 278H932M777 312H931" stroke="#777" stroke-width="1" vector-effect="non-scaling-stroke" fill="none"/><rect x="608" y="366" width="331" height="12" fill="#777"/><rect x="135" y="100" width="120" height="12" fill="#666"/><rect x="135" y="130" width="100" height="12" fill="#666"/><rect x="135" y="160" width="255" height="12" fill="#555"/><rect x="135" y="195" width="12" height="12" fill="#999"/></svg></div>
<div class="a" style="left:0;top:508.55px;width:23px;text-align:right;font-size:11.5px;line-height:1;color:#8c8c90">121</div>
<div class="a" style="left:0;top:526.50px;width:153px;height:79px;border-radius:9px;background:#3f6fe2"></div>
<div class="a" style="left:29px;top:533.00px;width:118px;height:67px;border-radius:5px;background:#fff;overflow:hidden;box-shadow:0 1px 2.5px rgba(0,0,0,.22)"><svg width="118" height="67" viewBox="0 0 1168 656" preserveAspectRatio="none" style="position:absolute;left:0;top:0"><rect x="36" y="510" width="56" height="40" fill="#1b1b1b"/><rect x="32" y="550" width="64" height="18" fill="#555"/><rect x="151" y="450" width="165" height="10" fill="#8a8a8a"/><path d="M147 508H316M147 551H316" stroke="#666" stroke-width="1" vector-effect="non-scaling-stroke" fill="none"/><path d="M358 472L411 470V606L358 604z" fill="#23284a"/><path d="M411 470L488 490V590L411 606z" fill="#c8c8cc"/><circle cx="499" cy="484" r="10" stroke="#777" stroke-width="1" vector-effect="non-scaling-stroke" fill="none"/><circle cx="533" cy="459" r="10" stroke="#777" stroke-width="1" vector-effect="non-scaling-stroke" fill="none"/><rect x="582" y="37" width="556" height="395" stroke="#8a8a8a" stroke-width="1" vector-effect="non-scaling-stroke" fill="none"/><rect x="611" y="92" width="148" height="12" fill="#777"/><g stroke="#6a6a6a" stroke-width="1.1" fill="none"><ellipse cx="1052" cy="161" rx="56" ry="26" vector-effect="non-scaling-stroke"/><ellipse cx="1052" cy="301" rx="56" ry="26" vector-effect="non-scaling-stroke"/><path d="M996 161V301M1108 161V301" vector-effect="non-scaling-stroke"/></g><rect x="698" y="164" width="61" height="10" fill="#8a8a8a"/><path d="M780 148H934M780 187H930" stroke="#777" stroke-width="1" vector-effect="non-scaling-stroke" fill="none"/><rect x="605" y="228" width="217" height="12" fill="#777"/><rect x="681" y="274" width="77" height="10" fill="#8a8a8a"/><rect x="681" y="303" width="60" height="10" fill="#8a8a8a"/><path d="M775 278H932M777 312H931" stroke="#777" stroke-width="1" vector-effect="non-scaling-stroke" fill="none"/><rect x="608" y="366" width="331" height="12" fill="#777"/><circle cx="287" cy="155" r="26" fill="#f6eeb0"/><rect x="275" y="188" width="24" height="26" fill="#c8c8c0"/></svg></div>
<div class="a" style="left:0;top:587.30px;width:23px;text-align:right;font-size:11.5px;line-height:1;color:#fff">122</div>
<div class="a" style="left:29px;top:611.75px;width:118px;height:67px;border-radius:5px;background:#fff;overflow:hidden;box-shadow:0 1px 2.5px rgba(0,0,0,.22)"><svg width="118" height="67" viewBox="0 0 1168 656" preserveAspectRatio="none" style="position:absolute;left:0;top:0"><rect x="36" y="510" width="56" height="40" fill="#1b1b1b"/><rect x="32" y="550" width="64" height="18" fill="#555"/><rect x="151" y="450" width="165" height="10" fill="#8a8a8a"/><path d="M147 508H316M147 551H316" stroke="#666" stroke-width="1" vector-effect="non-scaling-stroke" fill="none"/><path d="M358 472L411 470V606L358 604z" fill="#23284a"/><path d="M411 470L488 490V590L411 606z" fill="#c8c8cc"/><circle cx="499" cy="484" r="10" stroke="#777" stroke-width="1" vector-effect="non-scaling-stroke" fill="none"/><circle cx="533" cy="459" r="10" stroke="#777" stroke-width="1" vector-effect="non-scaling-stroke" fill="none"/><rect x="579" y="76" width="556" height="86" stroke="#8a8a8a" stroke-width="1" vector-effect="non-scaling-stroke" fill="none"/><rect x="820" y="114.0" width="80" height="10" fill="#aaa"/><rect x="579" y="186" width="556" height="91" stroke="#8a8a8a" stroke-width="1" vector-effect="non-scaling-stroke" fill="none"/><rect x="820" y="226.5" width="80" height="10" fill="#aaa"/><rect x="579" y="317" width="556" height="85" stroke="#8a8a8a" stroke-width="1" vector-effect="non-scaling-stroke" fill="none"/><rect x="820" y="354.5" width="80" height="10" fill="#aaa"/></svg></div>
<div class="a" style="left:0;top:666.05px;width:23px;text-align:right;font-size:11.5px;line-height:1;color:#8c8c90">123</div>
<div class="a" style="left:29px;top:690.50px;width:118px;height:67px;border-radius:5px;background:#fff;overflow:hidden;box-shadow:0 1px 2.5px rgba(0,0,0,.22)"><svg width="118" height="67" viewBox="0 0 1168 656" preserveAspectRatio="none" style="position:absolute;left:0;top:0"><rect x="36" y="510" width="56" height="40" fill="#1b1b1b"/><rect x="32" y="550" width="64" height="18" fill="#555"/><rect x="151" y="450" width="165" height="10" fill="#8a8a8a"/><path d="M147 508H316M147 551H316" stroke="#666" stroke-width="1" vector-effect="non-scaling-stroke" fill="none"/><path d="M358 472L411 470V606L358 604z" fill="#23284a"/><path d="M411 470L488 490V590L411 606z" fill="#c8c8cc"/><circle cx="499" cy="484" r="10" stroke="#777" stroke-width="1" vector-effect="non-scaling-stroke" fill="none"/><circle cx="533" cy="459" r="10" stroke="#777" stroke-width="1" vector-effect="non-scaling-stroke" fill="none"/><rect x="579" y="76" width="556" height="86" stroke="#8a8a8a" stroke-width="1" vector-effect="non-scaling-stroke" fill="none"/><rect x="820" y="114.0" width="80" height="10" fill="#aaa"/><rect x="579" y="186" width="556" height="91" stroke="#8a8a8a" stroke-width="1" vector-effect="non-scaling-stroke" fill="none"/><rect x="820" y="226.5" width="80" height="10" fill="#aaa"/><rect x="579" y="317" width="556" height="85" stroke="#8a8a8a" stroke-width="1" vector-effect="non-scaling-stroke" fill="none"/><rect x="820" y="354.5" width="80" height="10" fill="#aaa"/><rect x="445" y="47" width="105" height="96" rx="10" fill="#111"/><rect x="480" y="70" width="25" height="50" fill="#fff"/><rect x="445" y="178" width="105" height="99" rx="10" fill="#111"/><rect x="480" y="200" width="25" height="50" fill="#fff"/></svg></div>
<div class="a" style="left:0;top:744.80px;width:23px;text-align:right;font-size:11.5px;line-height:1;color:#8c8c90">124</div>
<div class="a" style="left:29px;top:769.25px;width:118px;height:67px;border-radius:5px;background:#fff;overflow:hidden;box-shadow:0 1px 2.5px rgba(0,0,0,.22)"><svg width="118" height="67" viewBox="0 0 1168 656" preserveAspectRatio="none" style="position:absolute;left:0;top:0"><rect x="36" y="510" width="56" height="40" fill="#1b1b1b"/><rect x="32" y="550" width="64" height="18" fill="#555"/><rect x="151" y="450" width="165" height="10" fill="#8a8a8a"/><path d="M147 508H316M147 551H316" stroke="#666" stroke-width="1" vector-effect="non-scaling-stroke" fill="none"/><path d="M358 472L411 470V606L358 604z" fill="#23284a"/><path d="M411 470L488 490V590L411 606z" fill="#c8c8cc"/><circle cx="499" cy="484" r="10" stroke="#777" stroke-width="1" vector-effect="non-scaling-stroke" fill="none"/><circle cx="533" cy="459" r="10" stroke="#777" stroke-width="1" vector-effect="non-scaling-stroke" fill="none"/><rect x="579" y="76" width="556" height="86" stroke="#8a8a8a" stroke-width="1" vector-effect="non-scaling-stroke" fill="none"/><rect x="820" y="114.0" width="80" height="10" fill="#aaa"/><rect x="579" y="186" width="556" height="91" stroke="#8a8a8a" stroke-width="1" vector-effect="non-scaling-stroke" fill="none"/><rect x="820" y="226.5" width="80" height="10" fill="#aaa"/><rect x="579" y="317" width="556" height="85" stroke="#8a8a8a" stroke-width="1" vector-effect="non-scaling-stroke" fill="none"/><rect x="820" y="354.5" width="80" height="10" fill="#aaa"/><rect x="445" y="47" width="105" height="96" rx="10" fill="#111"/><rect x="480" y="70" width="25" height="50" fill="#fff"/><rect x="445" y="178" width="105" height="99" rx="10" fill="#111"/><rect x="480" y="200" width="25" height="50" fill="#fff"/><text x="277" y="369" font-family="Liberation Sans" font-size="76" font-weight="700" fill="#1a1a1a" textLength="263" lengthAdjust="spacingAndGlyphs">NEXT.</text></svg></div>
<div class="a" style="left:0;top:823.55px;width:23px;text-align:right;font-size:11.5px;line-height:1;color:#8c8c90">125</div>
<div class="a" style="left:29px;top:848.00px;width:118px;height:67px;border-radius:5px;background:#fff;overflow:hidden;box-shadow:0 1px 2.5px rgba(0,0,0,.22)"><svg width="118" height="67" viewBox="0 0 1168 656" preserveAspectRatio="none" style="position:absolute;left:0;top:0"><rect x="36" y="510" width="56" height="40" fill="#1b1b1b"/><rect x="32" y="550" width="64" height="18" fill="#555"/><rect x="151" y="450" width="165" height="10" fill="#8a8a8a"/><path d="M147 508H316M147 551H316" stroke="#666" stroke-width="1" vector-effect="non-scaling-stroke" fill="none"/><path d="M358 472L411 470V606L358 604z" fill="#23284a"/><path d="M411 470L488 490V590L411 606z" fill="#c8c8cc"/><circle cx="499" cy="484" r="10" stroke="#777" stroke-width="1" vector-effect="non-scaling-stroke" fill="none"/><circle cx="533" cy="459" r="10" stroke="#777" stroke-width="1" vector-effect="non-scaling-stroke" fill="none"/><rect x="579" y="76" width="556" height="86" stroke="#8a8a8a" stroke-width="1" vector-effect="non-scaling-stroke" fill="none"/><rect x="820" y="114.0" width="80" height="10" fill="#aaa"/><rect x="579" y="186" width="556" height="91" stroke="#8a8a8a" stroke-width="1" vector-effect="non-scaling-stroke" fill="none"/><rect x="820" y="226.5" width="80" height="10" fill="#aaa"/><rect x="579" y="317" width="556" height="85" stroke="#8a8a8a" stroke-width="1" vector-effect="non-scaling-stroke" fill="none"/><rect x="820" y="354.5" width="80" height="10" fill="#aaa"/><rect x="445" y="47" width="105" height="96" rx="10" fill="#111"/><rect x="480" y="70" width="25" height="50" fill="#fff"/><rect x="445" y="178" width="105" height="99" rx="10" fill="#111"/><rect x="480" y="200" width="25" height="50" fill="#fff"/><text x="277" y="369" font-family="Liberation Sans" font-size="76" font-weight="700" fill="#1a1a1a" textLength="263" lengthAdjust="spacingAndGlyphs">NEXT.</text><path d="M50 110c20-40 80-50 120-30l10 40H40z" fill="#c0282a"/><rect x="80" y="90" width="150" height="40" fill="#d03030" opacity=".8"/></svg></div>
<div class="a" style="left:0;top:902.30px;width:23px;text-align:right;font-size:11.5px;line-height:1;color:#8c8c90">126</div>
<div class="a" style="left:29px;top:926.75px;width:118px;height:67px;border-radius:5px;background:#fff;overflow:hidden;box-shadow:0 1px 2.5px rgba(0,0,0,.22)"><svg width="118" height="67" viewBox="0 0 1168 656" preserveAspectRatio="none" style="position:absolute;left:0;top:0"><rect x="36" y="510" width="56" height="40" fill="#1b1b1b"/><rect x="32" y="550" width="64" height="18" fill="#555"/><rect x="151" y="450" width="165" height="10" fill="#8a8a8a"/><path d="M147 508H316M147 551H316" stroke="#666" stroke-width="1" vector-effect="non-scaling-stroke" fill="none"/><path d="M358 472L411 470V606L358 604z" fill="#23284a"/><path d="M411 470L488 490V590L411 606z" fill="#c8c8cc"/><circle cx="499" cy="484" r="10" stroke="#777" stroke-width="1" vector-effect="non-scaling-stroke" fill="none"/><circle cx="533" cy="459" r="10" stroke="#777" stroke-width="1" vector-effect="non-scaling-stroke" fill="none"/><rect x="579" y="76" width="556" height="86" stroke="#8a8a8a" stroke-width="1" vector-effect="non-scaling-stroke" fill="none"/><rect x="820" y="114.0" width="80" height="10" fill="#aaa"/><rect x="579" y="186" width="556" height="91" stroke="#8a8a8a" stroke-width="1" vector-effect="non-scaling-stroke" fill="none"/><rect x="820" y="226.5" width="80" height="10" fill="#aaa"/><rect x="579" y="317" width="556" height="85" stroke="#8a8a8a" stroke-width="1" vector-effect="non-scaling-stroke" fill="none"/><rect x="820" y="354.5" width="80" height="10" fill="#aaa"/><rect x="120" y="90" width="280" height="200" fill="#7ab3e0"/><path d="M170 290c40-90 120-110 200-80v80z" fill="#e8b070"/><circle cx="300" cy="180" r="35" fill="#333" opacity=".7"/></svg></div>
<div class="a" style="left:0;top:981.05px;width:23px;text-align:right;font-size:11.5px;line-height:1;color:#8c8c90">127</div>
<div class="a" style="left:29px;top:1005.50px;width:118px;height:67px;border-radius:5px;background:#fff;overflow:hidden;box-shadow:0 1px 2.5px rgba(0,0,0,.22)"><svg width="118" height="67" viewBox="0 0 1168 656" preserveAspectRatio="none" style="position:absolute;left:0;top:0"><rect x="254.0" y="82" width="660" height="9" fill="#9a9a9a"/><rect x="189.0" y="137" width="790" height="9" fill="#9a9a9a"/><rect x="264.0" y="192" width="640" height="9" fill="#9a9a9a"/><rect x="304.0" y="247" width="560" height="9" fill="#9a9a9a"/><rect x="234.0" y="302" width="700" height="9" fill="#9a9a9a"/><rect x="134.0" y="357" width="900" height="9" fill="#9a9a9a"/><rect x="284.0" y="412" width="600" height="9" fill="#9a9a9a"/><rect x="79.0" y="467" width="1010" height="9" fill="#9a9a9a"/></svg></div>
<div class="a" style="left:0;top:1059.80px;width:23px;text-align:right;font-size:11.5px;line-height:1;color:#8c8c90">128</div>
<div class="a" style="left:29px;top:1084.25px;width:118px;height:67px;border-radius:5px;background:#fff;overflow:hidden;box-shadow:0 1px 2.5px rgba(0,0,0,.22)"><svg width="118" height="67" viewBox="0 0 1168 656" preserveAspectRatio="none" style="position:absolute;left:0;top:0"><circle cx="260" cy="180" r="26" fill="#777"/><rect x="240" y="220" width="40" height="6" fill="#bbb"/><circle cx="400" cy="180" r="26" fill="#333"/><rect x="380" y="220" width="40" height="6" fill="#bbb"/><circle cx="540" cy="180" r="26" fill="#aaa"/><rect x="520" y="220" width="40" height="6" fill="#bbb"/><circle cx="680" cy="180" r="26" fill="#3050b0"/><rect x="660" y="220" width="40" height="6" fill="#bbb"/><circle cx="820" cy="180" r="26" fill="#d03030"/><rect x="800" y="220" width="40" height="6" fill="#bbb"/><circle cx="960" cy="180" r="26" fill="#bbb"/><rect x="940" y="220" width="40" height="6" fill="#bbb"/><circle cx="260" cy="330" r="26" fill="#999"/><rect x="240" y="370" width="40" height="6" fill="#bbb"/><circle cx="400" cy="330" r="26" fill="#e08020"/><rect x="380" y="370" width="40" height="6" fill="#bbb"/><circle cx="540" cy="330" r="26" fill="#40a0c0"/><rect x="520" y="370" width="40" height="6" fill="#bbb"/><circle cx="680" cy="330" r="26" fill="#555"/><rect x="660" y="370" width="40" height="6" fill="#bbb"/><circle cx="820" cy="330" r="26" fill="#222"/><rect x="800" y="370" width="40" height="6" fill="#bbb"/><circle cx="960" cy="330" r="26" fill="#888"/><rect x="940" y="370" width="40" height="6" fill="#bbb"/><circle cx="260" cy="480" r="26" fill="#40c040"/><rect x="240" y="520" width="40" height="6" fill="#bbb"/><circle cx="400" cy="480" r="26" fill="#999"/><rect x="380" y="520" width="40" height="6" fill="#bbb"/><circle cx="540" cy="480" r="26" fill="#333"/><rect x="520" y="520" width="40" height="6" fill="#bbb"/><circle cx="680" cy="480" r="26" fill="#777"/><rect x="660" y="520" width="40" height="6" fill="#bbb"/><circle cx="820" cy="480" r="26" fill="#333"/><rect x="800" y="520" width="40" height="6" fill="#bbb"/><circle cx="960" cy="480" r="26" fill="#666"/><rect x="940" y="520" width="40" height="6" fill="#bbb"/><rect x="200" y="70" width="60" height="10" fill="#999"/></svg></div>
<div class="a" style="left:0;top:1138.55px;width:23px;text-align:right;font-size:11.5px;line-height:1;color:#8c8c90">129</div>
<div class="a" style="left:29px;top:1163.00px;width:118px;height:67px;border-radius:5px;background:#fff;overflow:hidden;box-shadow:0 1px 2.5px rgba(0,0,0,.22)"><svg width="118" height="67" viewBox="0 0 1168 656" preserveAspectRatio="none" style="position:absolute;left:0;top:0"><rect x="480" y="320" width="210" height="12" fill="#888"/></svg></div>
<div class="a" style="left:0;top:1217.30px;width:23px;text-align:right;font-size:11.5px;line-height:1;color:#8c8c90">130</div>
</div>
<!-- /sidebarthumbs -->
<div class="a" id="toolbar" style="left:165px;top:329px;width:1931px;height:87px;background:linear-gradient(180deg,#f6f6f4 0,#f6f6f4 2px,#f0eff1 3px);border-bottom:1px solid #d6d6d8"></div>
<!-- traffic lights -->
<div class="a" style="left:-3px;top:339px;width:15px;height:15px;border-radius:50%;background:#e2574c"></div>
<div class="a" style="left:20px;top:339px;width:15px;height:15px;border-radius:50%;background:#e9b54a"></div>
<div class="a" style="left:45px;top:339px;width:15px;height:15px;border-radius:50%;background:#62c154"></div>
<!-- title -->
<svg class="a" style="left:1059px;top:340px" width="11" height="12" viewBox="0 0 11 12"><rect x="1" y="1" width="9" height="10" rx="2" fill="#5b7fe0"/><rect x="4.5" y="3" width="2" height="6" fill="#cfe0ff"/></svg>
<div class="a" style="left:1080px;top:337px;font-size:16.5px;line-height:1;font-weight:700;color:#3c3c3e;white-space:nowrap">vibe_coding_talk</div>
<!-- toolbar icons -->
<svg class="ic" style="left:189px;top:368px" width="22" height="18" viewBox="0 0 22 18"><rect x="1.5" y="1.5" width="19" height="15" rx="2.5" stroke="#808083" fill="none" stroke-width="1.6"/><path d="M7 1.5v15" stroke="#808083" fill="none" stroke-width="1.6"/><path d="M4 4.5v3" stroke="#808083" stroke-width="1.4"/></svg>
<div class="a" style="left:240px;top:366px;width:62px;height:24px;border-radius:5px;background:#efeef1"></div>
<div class="a" style="left:247px;top:371px;font-size:14.5px;line-height:1;color:#707072;white-space:nowrap">50%</div>
<svg class="ic" style="left:284px;top:373px" width="12" height="9" viewBox="0 0 12 9"><path d="M2 2.5l4 4 4-4" stroke="#707072" stroke-width="1.8" fill="none"/></svg>
<svg class="ic" style="left:338px;top:368px" width="22" height="18" viewBox="0 0 22 18"><rect x="1.5" y="1.5" width="19" height="15" rx="2" stroke="#808083" fill="none" stroke-width="1.6"/><path d="M11 5v8M7 9h8" stroke="#808083" stroke-width="1.8"/></svg>
<svg class="ic" style="left:649px;top:368px" width="14" height="17" viewBox="0 0 14 17"><path d="M2 1.5l11 7-11 7z" fill="#707072"/></svg>
<svg class="ic" style="left:942px;top:368px" width="22" height="18" viewBox="0 0 22 18"><rect x="2" y="2" width="18" height="14" rx="2" stroke="#808083" fill="none" stroke-width="1.6"/><path d="M2 6.5h18M2 11h18M9 6.5v9.5" stroke="#808083" stroke-width="1.5"/></svg>
<svg class="ic" style="left:1002px;top:367px" width="20" height="20" viewBox="0 0 20 20"><circle cx="10" cy="10" r="8" stroke="#808083" fill="none" stroke-width="1.6"/><path d="M10 2v8l5.5 5.5" stroke="#808083" fill="none" stroke-width="1.6"/></svg>
<svg class="ic" style="left:1060px;top:368px" width="22" height="18" viewBox="0 0 22 18"><rect x="2" y="2" width="18" height="14" rx="1" stroke="#808083" fill="none" stroke-width="1.5" stroke-dasharray="5 2"/><text x="11" y="13" font-size="10" text-anchor="middle" fill="#808083" font-family="Liberation Sans">A</text></svg>
<svg class="ic" style="left:1119px;top:366px" width="22" height="20" viewBox="0 0 22 20"><circle cx="8" cy="8" r="6" stroke="#808083" fill="none" stroke-width="1.6"/><rect x="8" y="8" width="11" height="10" rx="2" fill="#efeef1" stroke="#808083" stroke-width="1.6"/></svg>
<svg class="ic" style="left:1181px;top:368px" width="22" height="18" viewBox="0 0 22 18"><rect x="2" y="2" width="18" height="14" rx="1.5" stroke="#808083" fill="none" stroke-width="1.6"/><path d="M3 15l6-6 4 3 3-2 4 5z" fill="#808083"/><circle cx="7" cy="6" r="1.6" fill="#808083"/></svg>
<svg class="ic" style="left:1253px;top:367px" width="20" height="20" viewBox="0 0 20 20"><path d="M3 2h14a2 2 0 0 1 2 2v9a2 2 0 0 1-2 2H9l-4 3v-3H3a2 2 0 0 1-2-2V4a2 2 0 0 1 2-2z" stroke="#808083" fill="none" stroke-width="1.6"/><path d="M5 6h10M5 9h10M5 12h6" stroke="#808083" stroke-width="1.2"/></svg>
<svg class="ic" style="left:1573px;top:366px" width="22" height="20" viewBox="0 0 22 20"><circle cx="12" cy="9" r="7" stroke="#808083" fill="none" stroke-width="1.6"/><circle cx="12" cy="7" r="2.5" fill="#808083"/><path d="M8 14c1-3 7-3 8 0" fill="#808083"/><circle cx="6" cy="14" r="3.5" fill="#efeef1" stroke="#808083" stroke-width="1.6"/></svg>
<div class="a" style="left:1872px;top:364px;width:74px;height:26px;border-radius:6px;background:#e4e3e6"></div>
<svg class="ic" style="left:1898px;top:366px" width="22" height="22" viewBox="0 0 22 22"><path d="M12 2l7 7-4 2-5-5z" fill="none" stroke="#6a6a6c" stroke-width="1.6"/><path d="M10 6l5 5-5 4-4-4z" fill="none" stroke="#6a6a6c" stroke-width="1.6"/><path d="M6 11l-3 6 2 2 6-3" fill="none" stroke="#6a6a6c" stroke-width="1.6"/></svg>
<svg class="ic" style="left:1973px;top:367px" width="28" height="20" viewBox="0 0 28 20"><path d="M10 2l8 8-8 8-8-8z" fill="none" stroke="#6a6a6c" stroke-width="1.6"/><path d="M16 2l8 8-8 8" fill="none" stroke="#6a6a6c" stroke-width="1.6"/></svg>
<svg class="ic" style="left:2053px;top:368px" width="22" height="18" viewBox="0 0 22 18"><rect x="2" y="2" width="18" height="14" rx="2" fill="none" stroke="#6a6a6c" stroke-width="1.6"/><rect x="5.5" y="5.5" width="11" height="7" fill="#6a6a6c"/></svg>
<!-- toolbar labels -->
<div class="tb" style="left:170px;top:397px;width:60px;line-height:1">View</div>
<div class="tb" style="left:240px;top:397px;width:60px;line-height:1">Zoom</div>
<div class="tb" style="left:308px;top:397px;width:80px;line-height:1">Add Slide</div>
<div class="tb" style="left:625px;top:397px;width:60px;line-height:1">Play</div>
<div class="tb" style="left:923px;top:397px;width:60px;line-height:1">Table</div>
<div class="tb" style="left:982px;top:397px;width:60px;line-height:1">Chart</div>
<div class="tb" style="left:1041px;top:397px;width:60px;line-height:1">Text</div>
<div class="tb" style="left:1100px;top:397px;width:60px;line-height:1">Shape</div>
<div class="tb" style="left:1161px;top:397px;width:60px;line-height:1">Media</div>
<div class="tb" style="left:1223px;top:397px;width:80px;line-height:1">Comment</div>
<div class="tb" style="left:1534px;top:397px;width:100px;line-height:1">Collaborate</div>
<div class="tb" style="left:1868px;top:397px;width:80px;line-height:1;color:#717173">Format</div>
<div class="tb" style="left:1946px;top:397px;width:80px;line-height:1;color:#717173">Animate</div>
<div class="tb" style="left:2032px;top:397px;text-align:left;line-height:1;color:#717173">Document</div>
<div class="a" id="canvas" style="left:165px;top:416px;width:1613px;height:1238px;background:#e4e4e5"></div>
<div class="a" id="inspector" style="left:1778px;top:416px;width:318px;height:1238px;background:#ececee;border-left:1px solid #d9d9db">
</div>
<div class="a" style="left:1779px;top:449px;width:317px;height:1px;background:#d6d6d8"></div>
<div class="a ins" style="left:1792px;top:426px;width:304px;text-align:center;font-size:16px;color:#8a8a8c">Slide</div>
<div class="a" style="left:1792px;top:464px;width:320px;height:88px;border-radius:5px;background:#fff"></div>
<div class="a" style="left:1800px;top:482px;width:95px;height:54px;background:#fff;box-shadow:0 1px 2px rgba(0,0,0,.35),0 0 1px rgba(0,0,0,.25)"></div>
<div class="a ins" style="left:1800px;top:501px;width:95px;text-align:center;font-size:7.5px;font-weight:700;color:#222">Lorem Ipsum Dolor</div>
<div class="a" style="left:1834px;top:513px;width:26px;height:1.5px;background:#9a9a9a"></div>
<div class="a ins" style="left:1902px;top:490.3px;font-size:15px;color:#8e8e90">Slide Layout</div>
<div class="a ins" style="left:1903px;top:511.3px;font-size:14.5px;font-weight:700;color:#2a2a2c">TITLE</div>
<svg class="a" style="left:2066px;top:500px" width="18" height="14" viewBox="0 0 18 14"><path d="M3 4l6 6 6-6" stroke="#555" stroke-width="1.8" fill="none"/></svg>
<div class="a" style="left:1800px;top:566px;width:290px;height:1px;background:#d9d9db"></div>
<div class="a ins" style="left:1799.5px;top:587.7px;font-size:14.7px;font-weight:700;color:#3a3a3c">Appearance</div>
<div class="a cb" style="top:619px"></div><div class="a ins" style="left:1825px;top:618.9px;font-size:15px;color:#3c3c3e">Title</div>
<div class="a cb" style="top:649px"></div><div class="a ins" style="left:1825px;top:649.8px;font-size:15px;color:#3c3c3e">Body</div>
<div class="a cb" style="top:680px"></div><div class="a ins" style="left:1825px;top:680.7px;font-size:15px;color:#3c3c3e">Slide Number</div>
<div class="a" style="left:1800px;top:712px;width:290px;height:1px;background:#d9d9db"></div>
<div class="a ins" style="left:1798.5px;top:734px;font-size:14.7px;font-weight:700;color:#3a3a3c">Background</div>
<div class="a" style="left:1798px;top:763.5px;width:290px;height:27px;border-radius:6px;background:#e0e0e2"></div>
<div class="a" style="left:1798px;top:763.5px;width:145px;height:26px;border-radius:6px;background:#fff;box-shadow:0 0.5px 1.5px rgba(0,0,0,.28)"></div>
<div class="a ins" style="left:1798px;top:768.3px;width:145px;text-align:center;font-size:16.5px;color:#2c2c2e">Standard</div>
<div class="a ins" style="left:1943px;top:768.3px;width:145px;text-align:center;font-size:16.5px;color:#3c3c3e">Dynamic</div>
<div class="a ins" style="left:1798.5px;top:818.3px;font-size:15.3px;color:#3c3c3e">Current Fill</div>
<div class="a" style="left:2010px;top:812.5px;width:79px;height:25px;border-radius:6px;background:#fff;box-shadow:0 0.5px 1.5px rgba(0,0,0,.25)"></div>
<div class="a" style="left:1798px;top:854px;width:291px;height:26px;border-radius:6px;background:#fff;box-shadow:0 0.5px 1.5px rgba(0,0,0,.25)"></div>
<div class="a ins" style="left:1808px;top:859.1px;font-size:15.2px;color:#2c2c2e">Color Fill</div>
<div class="a" style="left:2068px;top:856.5px;width:20px;height:21px;border-radius:5px;background:linear-gradient(#4a8ff8,#2a6be6)"></div>
<svg class="a" style="left:2068px;top:856.5px" width="20" height="21" viewBox="0 0 20 21"><path d="M6 8l4-3.5 4 3.5M6 13l4 3.5 4-3.5" stroke="#fff" stroke-width="1.7" fill="none"/></svg>
<div class="a" style="left:1798.5px;top:891.5px;width:79px;height:26px;border-radius:6px;background:#fff;box-shadow:0 0.5px 1.5px rgba(0,0,0,.25)"></div>
<div class="a" style="left:1852px;top:892px;width:1px;height:25px;background:#e2e2e4"></div>
<div class="a" style="left:1857px;top:896.5px;width:16px;height:16px;border-radius:50%;background:conic-gradient(#f55 0deg,#fc4 60deg,#6d6 120deg,#4cf 180deg,#66f 240deg,#e5e 300deg,#f55 360deg)"></div>
<div class="a" style="left:1861px;top:900.5px;width:8px;height:8px;border-radius:50%;background:#fff"></div>
<div class="a" style="left:1800px;top:935px;width:290px;height:1px;background:#d9d9db"></div>
<svg class="a" style="left:1973px;top:1001px" width="18" height="26" viewBox="0 0 18 26"><path d="M2 1.5v19l4.5-4.3 3.3 7.3 3.2-1.4-3.2-7.1h6z" fill="#111" stroke="#fff" stroke-width="1.3"/></svg>
<div class="a" style="left:1800px;top:1574px;width:290px;height:1px;background:#d9d9db"></div>
<div class="a" style="left:1822px;top:1603px;width:245px;height:24px;border-radius:6px;background:#fff;box-shadow:0 0.5px 1.5px rgba(0,0,0,.25)"></div>
<div class="a ins" style="left:1822px;top:1608px;width:245px;text-align:center;font-size:15px;color:#2c2c2e">Edit Slide Layout</div>

<!-- SLIDE -->
<div class="a" id="slide" style="left:388px;top:707px;width:1168px;height:656px;background:#fff;box-shadow:0 1px 3px rgba(0,0,0,.28),0 0 1px rgba(0,0,0,.2)">
<svg class="a" style="left:0;top:0" width="1168" height="656" viewBox="0 0 1168 656">
 <defs>
  <radialGradient id="glow" cx="50%" cy="40%" r="58%"><stop offset="0" stop-color="#fffefa"/><stop offset=".5" stop-color="#fffbe6"/><stop offset=".8" stop-color="#faf2c0"/><stop offset="1" stop-color="#eee290"/></radialGradient>
  <linearGradient id="metal" x1="0" x2="1"><stop offset="0" stop-color="#9a9896"/><stop offset=".45" stop-color="#e4e0dc"/><stop offset="1" stop-color="#8e8c8a"/></linearGradient>
  <linearGradient id="side" x1="0" x2="1"><stop offset="0" stop-color="#d0d0d4"/><stop offset=".5" stop-color="#e6e6e9"/><stop offset="1" stop-color="#c4c4c8"/></linearGradient>
  <linearGradient id="front" x1="0" x2="1"><stop offset="0" stop-color="#161c40"/><stop offset=".55" stop-color="#26357c"/><stop offset="1" stop-color="#10142e"/></linearGradient>
  <pattern id="grille" width="3" height="6" patternUnits="userSpaceOnUse"><rect width="1.2" height="6" fill="#5a6ab8" opacity=".35"/></pattern>
 </defs>
 <g fill="none" stroke="#1b1b1b" stroke-width="3.6" stroke-linecap="round" stroke-linejoin="round">
  <rect x="582" y="36.8" width="556" height="395" rx="6"/>
  <ellipse cx="1052" cy="160.8" rx="55.5" ry="26"/>
  <ellipse cx="1052" cy="301" rx="55.5" ry="25.6"/>
  <path d="M996.5 160.8V301M1107.5 160.8V301"/>
  <circle cx="499" cy="484" r="10"/>
  <circle cx="532.7" cy="458.8" r="10.5"/>
 </g>
 <g fill="none" stroke="#1e1e1e" stroke-width="3" stroke-linecap="round" stroke-linejoin="round">
  <path d="M780 148.3H934M924 142.5L935 148.3L924 154"/>
  <path d="M780 186.7H930M790 181L779 186.7L790 192.5"/>
  <path d="M775 277.8H932M922 272L933 277.8L922 283.5"/>
  <path d="M777 312H931M787 306.3L776 312L787 317.8"/>
  <path d="M147 508.6H315M305 502.8L316 508.6L305 514.4"/>
  <path d="M147 551H315M157 545.3L146 551L157 556.8"/>
 </g>
 <!-- lightbulb -->
 <g>
  <path d="M287.5 128.5c-14.5 0-25.5 11.8-25.5 26.5 0 9 4 15 8.5 21 3.3 4.4 5 8.5 5.5 17h23c.5-8.5 2.2-12.6 5.5-17 4.5-6 8.5-12 8.5-21 0-14.7-11-26.5-25.5-26.5z" fill="url(#glow)" stroke="#ece4a8" stroke-width="1"/>
  <rect x="276.5" y="193" width="22" height="15" rx="2" fill="url(#metal)"/>
  <path d="M277 198h21M277 202h21M277 206h21" stroke="#a8a6a4" stroke-width="1"/>
  <path d="M280 208h15l-2.5 5.5q-5 2.5-10 0z" fill="#505050"/>
 </g>
 <!-- laptop -->
 <g>
  <path d="M33 507h62v38H33z" fill="#1a1a1a" stroke="#8c8c8c" stroke-width="1.6"/>
  <path d="M60 510h33v32z" fill="#3a3a3a" opacity=".6"/>
  <path d="M33 544h62l3 30H30z" fill="#b8b8bc"/>
  
  <rect x="49" y="563" width="30" height="10" fill="#c8c8cc"/>
  <path d="M30 574h68v2H30z" fill="#8a8a8e"/>
 </g>
 <!-- server -->
 <g>
  <path d="M412 471.7L476 492.5Q481 494.5 481 499V584L412 604z" fill="url(#side)"/>
  <rect x="438" y="524" width="10.8" height="10.5" fill="#2a2a2a"/>
  <rect x="441" y="527" width="3" height="4.5" fill="#cfcfcf"/>
  <path d="M359.3 474L412 471.7V605L359.3 603z" fill="url(#front)"/>
  <path d="M359.3 474L412 471.7V605L359.3 603z" fill="url(#grille)"/>
  <rect x="372" y="477" width="18" height="5" fill="#2a2a36"/>
  <rect x="365" y="519" width="5" height="4" fill="#c8c8d8"/>
  <rect x="383" y="510" width="8" height="9" fill="#12121a" opacity=".8"/>
  <path d="M407 472V605" stroke="#0c0c10" stroke-width="5"/>
  <path d="M358 600h33v6h-33zM402 604.5h37.5v7h-37.5zM466 588h23v5h-23z" fill="#151515"/>
 </g>
 <!-- laptop keyboard pattern -->
 <g>
  <path d="M36 548h56l1 12H35z" fill="#2e2e32"/>
  <path d="M36 551.5h56M36 555h57M48 548v12M60 548v12M72 548v12M84 548v12" stroke="#9a9a9e" stroke-width=".8"/>
 </g>
</svg>
<div class="a hand" style="left:611px;top:86px;letter-spacing:.2px">Who are you?</div>
<div class="a hand" style="left:698px;top:157px">Stopa</div>
<div class="a hand" style="left:605.5px;top:222px;letter-spacing:.9px">What do you want?</div>
<div class="a hand" style="left:681px;top:268.5px;letter-spacing:-.2px">Stopa's</div>
<div class="a hand" style="left:681px;top:297.5px">todos</div>
<div class="a hand" style="left:608.5px;top:359.5px;letter-spacing:.45px">Generate Stopa's "Todo" Page</div>
<div class="a hand" style="left:151px;top:443px;font-size:19px;letter-spacing:.1px">myapp.com/todos</div>
</div>

</body></html>
